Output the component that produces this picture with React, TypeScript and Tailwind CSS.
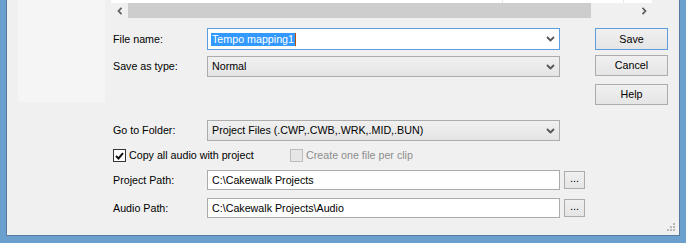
const Chevron = () => (
  <svg width="9" height="6" viewBox="0 0 9 6" className="shrink-0">
    <path d="M1 1 L4.5 4.5 L8 1" fill="none" stroke="#555" strokeWidth="1.8" />
  </svg>
);

function Combo({ children, focused }: { children: React.ReactNode; focused?: boolean }) {
  return (
    <div
      className={
        focused
          ? "w-[353px] h-full flex items-center justify-between border border-[#5a9ee0] bg-white pl-[3px] pr-[4px]"
          : "w-[353px] h-full flex items-center justify-between border border-[#acacac] bg-gradient-to-b from-[#f0f0f0] to-[#e5e5e5] pl-[4px] pr-[4px]"
      }
    >
      {children}
      <Chevron />
    </div>
  );
}

function Button({ label, focused }: { label: string; focused?: boolean }) {
  return (
    <div
      className={
        "w-full h-full flex items-center justify-center bg-gradient-to-b from-[#f0f0f0] to-[#e5e5e5] border " +
        (focused ? "border-[#5a9ee0]" : "border-[#acacac]")
      }
    >
      {label}
    </div>
  );
}

function PathRow({ label, value }: { label: string; value: string }) {
  return (
    <div className="flex items-center h-[20px] mt-[8px]">
      <div className="w-[96px] pl-[2px]">{label}</div>
      <div className="w-[353px] h-full border border-[#ababab] bg-white flex items-center pl-[4px]">{value}</div>
      <div className="ml-[4px] w-[21px] h-[18px] border border-[#acacac] bg-gradient-to-b from-[#f0f0f0] to-[#e5e5e5] flex items-end justify-center leading-none pb-[4px] text-[11px]">
        ...
      </div>
    </div>
  );
}

export default function App() {
  return (
    <div className="w-[686px] h-[243px] bg-[#6b9fce] px-[6px] pb-[7px] font-['Liberation_Sans',Arial,sans-serif] text-[10.7px] text-black">
      <div className="relative h-full flex bg-[#f0f0f0] border-x border-b border-[#55799f]">
        {/* left place panel */}
        <div className="ml-[11px] w-[87px] h-[102px] bg-[#f5f5f5]" />

        <div className="ml-[6px] flex flex-col">
          {/* list view bottom + horizontal scrollbar */}
          <div className="w-[541px] h-[3px] bg-white flex">
            <div className="ml-[391px] w-px h-full bg-[#e8e8f4]" />
            <div className="ml-[120px] w-px h-full bg-[#e8e8f4]" />
          </div>
          <div className="w-[541px] h-[15px] flex bg-[#f0f0f0]">
            <div className="w-[17px] h-full flex items-center justify-center">
              <svg width="6" height="8" viewBox="0 0 6 8">
                <path d="M4.5 0.8 L1.5 4 L4.5 7.2" fill="none" stroke="#606060" strokeWidth="1.8" />
              </svg>
            </div>
            <div className="w-[463px] h-full bg-[#cdcdcd]" />
            <div className="flex-1" />
            <div className="w-[17px] h-full flex items-center justify-center">
              <svg width="6" height="8" viewBox="0 0 6 8">
                <path d="M1.5 0.8 L4.5 4 L1.5 7.2" fill="none" stroke="#606060" strokeWidth="1.8" />
              </svg>
            </div>
          </div>

          {/* name / type + buttons */}
          <div className="flex mt-[10px]">
            <div className="flex flex-col w-[449px]">
              <div className="flex items-center h-[22px]">
                <div className="w-[96px] pl-[2px]">File name:</div>
                <Combo focused>
                  <span className="flex items-center">
                    <span className="bg-[#3399ff] text-white px-[1px] leading-[13px]">Tempo mapping1</span>
                    <span className="w-px h-[13px] bg-[#c05000]" />
                  </span>
                </Combo>
              </div>
              <div className="flex items-center h-[21px] mt-[6px]">
                <div className="w-[96px] pl-[2px]">Save as type:</div>
                <Combo>
                  <span>Normal</span>
                </Combo>
              </div>
            </div>
            <div className="ml-[35px] flex flex-col w-[73px]">
              <div className="h-[22px]">
                <Button label="Save" focused />
              </div>
              <div className="h-[21px] mt-[5px]">
                <Button label="Cancel" />
              </div>
              <div className="h-[21px] mt-[8px]">
                <Button label="Help" />
              </div>
            </div>
          </div>

          {/* folder */}
          <div className="flex items-center h-[21px] mt-[15px]">
            <div className="w-[96px] pl-[2px]">Go to Folder:</div>
            <Combo>
              <span>Project Files (.CWP,.CWB,.WRK,.MID,.BUN)</span>
            </Combo>
          </div>

          {/* checkboxes */}
          <div className="flex items-center h-[13px] mt-[8px] pl-[2px]">
            <div className="w-[177px] flex items-center">
              <div className="w-[13px] h-[13px] border border-[#333] bg-white flex items-center justify-center">
                <svg width="9" height="8" viewBox="0 0 9 8">
                  <path d="M1 4 L3.5 6.5 L8 1.2" fill="none" stroke="#111" strokeWidth="2" />
                </svg>
              </div>
              <span className="ml-[3px]">Copy all audio with project</span>
            </div>
            <div className="w-[13px] h-[13px] border border-[#bcbcbc] bg-[#e6e6e6]" />
            <span className="ml-[3px] text-[#8d8d8d]">Create one file per clip</span>
          </div>

          <PathRow label="Project Path:" value="C:\Cakewalk Projects" />
          <PathRow label="Audio Path:" value="C:\Cakewalk Projects\Audio" />
        </div>

        {/* resize grip */}
        <svg width="9" height="9" viewBox="0 0 9 9" className="absolute right-[3px] bottom-[3px]">
          <rect x="6" y="0" width="2" height="2" fill="#b8b8b8" />
          <rect x="3" y="3" width="2" height="2" fill="#b8b8b8" />
          <rect x="6" y="3" width="2" height="2" fill="#b8b8b8" />
          <rect x="0" y="6" width="2" height="2" fill="#b8b8b8" />
          <rect x="3" y="6" width="2" height="2" fill="#b8b8b8" />
          <rect x="6" y="6" width="2" height="2" fill="#b8b8b8" />
        </svg>
      </div>
    </div>
  );
}
